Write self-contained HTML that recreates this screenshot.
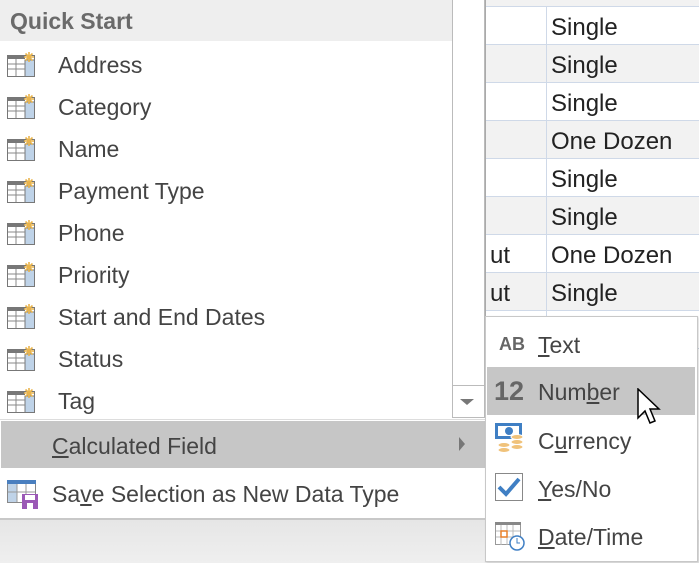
<!DOCTYPE html>
<html><head><style>
body{margin:0;width:699px;height:563px;overflow:hidden;position:relative;background:#fff;font-family:"Liberation Sans",sans-serif;color:#444;}
.abs{position:absolute;}
.row{position:absolute;left:485px;width:214px;height:37px;border-bottom:1px solid #cfd9e8;}
.row span{position:absolute;left:66px;top:7px;font-size:24px;color:#222;}
.row .u{left:5px;}
.row:before{content:"";position:absolute;left:61px;top:0;bottom:0;border-left:1px solid #cfd9e8;}
.item{position:absolute;left:0;width:452px;height:42px;}
.item span{position:absolute;left:58px;top:9px;font-size:23px;}
.ic{position:absolute;left:7px;top:9px;}
.sub{position:absolute;left:487px;width:208px;height:48px;}
.sub span{position:absolute;left:51px;top:12px;font-size:23px;}
</style></head><body>
<div class="abs" style="left:485px;top:0;width:214px;height:6px;border-bottom:1px solid #cfd9e8;background:#f2f2f2"></div>
<div class="row" style="top:7px;background:#fff"><span>Single</span></div>
<div class="row" style="top:45px;background:#f2f2f2"><span>Single</span></div>
<div class="row" style="top:83px;background:#fff"><span>Single</span></div>
<div class="row" style="top:121px;background:#f2f2f2"><span>One Dozen</span></div>
<div class="row" style="top:159px;background:#fff"><span>Single</span></div>
<div class="row" style="top:197px;background:#f2f2f2"><span>Single</span></div>
<div class="row" style="top:235px;background:#fff"><span class="u">ut</span><span>One Dozen</span></div>
<div class="row" style="top:273px;background:#f2f2f2"><span class="u">ut</span><span>Single</span></div>
<div class="row" style="top:311px;background:#fff"></div>
<div class="abs" style="left:0;top:0;width:485px;height:519px;background:#fff;border-right:1px solid #aaa;"></div>
<div class="abs" style="left:0;top:0;width:452px;height:41px;background:#eee;"></div>
<div class="abs" style="left:10px;top:8px;font-size:23px;font-weight:bold;color:#6a6a6a;">Quick Start</div>
<div class="abs" style="left:452px;top:0;width:31px;height:385px;border-left:1px solid #bbb;border-right:1px solid #bbb;border-bottom:1px solid #bbb;"></div>
<div class="abs" style="left:452px;top:385px;width:31px;height:32px;border:1px solid #bbb;border-top:none;"></div>
<div class="abs" style="left:460px;top:399px;width:0;height:0;border-left:7px solid transparent;border-right:7px solid transparent;border-top:6px solid #777;"></div>

<svg width="0" height="0" style="position:absolute"><defs>
<g id="tb"><rect x="0.5" y="2.5" width="27" height="21" fill="#fff" stroke="#777"/><rect x="0" y="2" width="18" height="4" fill="#777"/><rect x="18" y="7" width="9.5" height="16.5" fill="#bfd3e8" stroke="#777"/><path d="M1 11H18M1 16H18M9 6V23" stroke="#888"/><g stroke="#e9b44c" stroke-width="1.6"><path d="M22 -1V9M17 4H27M18.5 0.5L25.5 7.5M25.5 0.5L18.5 7.5"/></g></g>
</defs></svg>

<div class="item" style="top:43px"><svg class="ic" width="30" height="26" viewBox="0 -1 30 26"><use href="#tb"/></svg><span>Address</span></div>
<div class="item" style="top:85px"><svg class="ic" width="30" height="26" viewBox="0 -1 30 26"><use href="#tb"/></svg><span>Category</span></div>
<div class="item" style="top:127px"><svg class="ic" width="30" height="26" viewBox="0 -1 30 26"><use href="#tb"/></svg><span>Name</span></div>
<div class="item" style="top:169px"><svg class="ic" width="30" height="26" viewBox="0 -1 30 26"><use href="#tb"/></svg><span>Payment Type</span></div>
<div class="item" style="top:211px"><svg class="ic" width="30" height="26" viewBox="0 -1 30 26"><use href="#tb"/></svg><span>Phone</span></div>
<div class="item" style="top:253px"><svg class="ic" width="30" height="26" viewBox="0 -1 30 26"><use href="#tb"/></svg><span>Priority</span></div>
<div class="item" style="top:295px"><svg class="ic" width="30" height="26" viewBox="0 -1 30 26"><use href="#tb"/></svg><span>Start and End Dates</span></div>
<div class="item" style="top:337px"><svg class="ic" width="30" height="26" viewBox="0 -1 30 26"><use href="#tb"/></svg><span>Status</span></div>
<div class="item" style="top:379px"><svg class="ic" width="30" height="26" viewBox="0 -1 30 26"><use href="#tb"/></svg><span>Tag</span></div>

<div class="abs" style="left:0;top:419px;width:485px;height:1px;background:#ddd;"></div>
<div class="abs" style="left:1px;top:421px;width:484px;height:47px;background:#c6c6c6;"></div>
<div class="abs" style="left:52px;top:433px;font-size:23px;"><u>C</u>alculated Field</div>
<div class="abs" style="left:459px;top:437px;width:0;height:0;border-top:7px solid transparent;border-bottom:7px solid transparent;border-left:6px solid #777;"></div>

<svg class="abs" style="left:7px;top:480px" width="32" height="30" viewBox="0 0 32 30"><rect x="0.5" y="0.5" width="28" height="22" fill="#fff" stroke="#888"/><rect x="0" y="0" width="29" height="4" fill="#4a7fbf"/><rect x="1" y="4" width="9" height="18" fill="#bfd3e8"/><path d="M10 4V22M19 4V22M1 12H28" stroke="#999"/><rect x="15" y="14" width="16" height="15" fill="#9b59b6"/><rect x="18" y="15" width="10" height="5" fill="#fff"/><rect x="20" y="23" width="6" height="6" fill="#fff"/></svg>
<div class="abs" style="left:52px;top:481px;font-size:23px;">Sa<u>v</u>e Selection as New Data Type</div>
<div class="abs" style="left:0;top:518px;width:485px;height:2px;background:#c8c8c8;"></div>
<div class="abs" style="left:0;top:520px;width:699px;height:43px;background:linear-gradient(#e6e6e6,#efefef);"></div>

<div class="abs" style="left:485px;top:316px;width:211px;height:244px;background:#fff;border:1px solid #c8c8c8;box-shadow:1px 1px 2px rgba(0,0,0,.15);"></div>
<div class="sub" style="top:320px"><span style="left:12px;top:14px;font-size:18px;font-weight:bold;color:#666;">AB</span><span><u>T</u>ext</span></div>
<div class="sub" style="top:367px;background:#c6c6c6"><span style="left:7px;top:9px;font-size:27px;font-weight:bold;color:#666;">12</span><span>Num<u>b</u>er</span></div>
<div class="sub" style="top:416px"><svg style="position:absolute;left:8px;top:7px" width="30" height="32" viewBox="0 0 30 32"><rect x="1.5" y="1.5" width="24" height="13" fill="#fff" stroke="#3f7fc4" stroke-width="3"/><circle cx="14" cy="8" r="4" fill="#3f7fc4"/><ellipse cx="22" cy="14" rx="6" ry="2.5" fill="#f0c27a" stroke="#fff"/><ellipse cx="22" cy="19" rx="6" ry="2.5" fill="#f0c27a" stroke="#fff"/><ellipse cx="22" cy="24" rx="6" ry="2.5" fill="#f0c27a" stroke="#fff"/><ellipse cx="9" cy="22" rx="6" ry="2.5" fill="#f0c27a" stroke="#fff"/><ellipse cx="9" cy="27" rx="6" ry="2.5" fill="#f0c27a" stroke="#fff"/></svg><span>C<u>u</u>rrency</span></div>
<div class="sub" style="top:464px"><svg style="position:absolute;left:8px;top:9px" width="30" height="30" viewBox="0 0 30 30"><rect x="0.5" y="0.5" width="27" height="27" fill="#fff" stroke="#888"/><path d="M4 14L11 21L24 6" fill="none" stroke="#3f7fc4" stroke-width="4"/></svg><span><u>Y</u>es/No</span></div>
<div class="sub" style="top:512px"><svg style="position:absolute;left:8px;top:10px" width="32" height="30" viewBox="0 0 32 30"><rect x="0.5" y="0.5" width="25" height="22" fill="#fff" stroke="#999"/><rect x="0" y="0" width="26" height="3" fill="#888"/><path d="M6 3V23M12 3V23M18 3V23M1 9H25M1 15H25" stroke="#bbb"/><rect x="6" y="9" width="6" height="6" fill="none" stroke="#e8802a" stroke-width="1.5"/><circle cx="22" cy="21" r="7" fill="#fff" stroke="#3f7fc4" stroke-width="1.5"/><path d="M22 16V21H25" stroke="#3f7fc4" fill="none"/></svg><span><u>D</u>ate/Time</span></div>

<svg class="abs" style="left:637px;top:388px" width="28" height="42" viewBox="0 0 28 42"><path d="M1 1V30L8 23L13 35L18 33L13 21H22Z" fill="#fff" stroke="#000" stroke-width="1.5"/></svg>
</body></html>
